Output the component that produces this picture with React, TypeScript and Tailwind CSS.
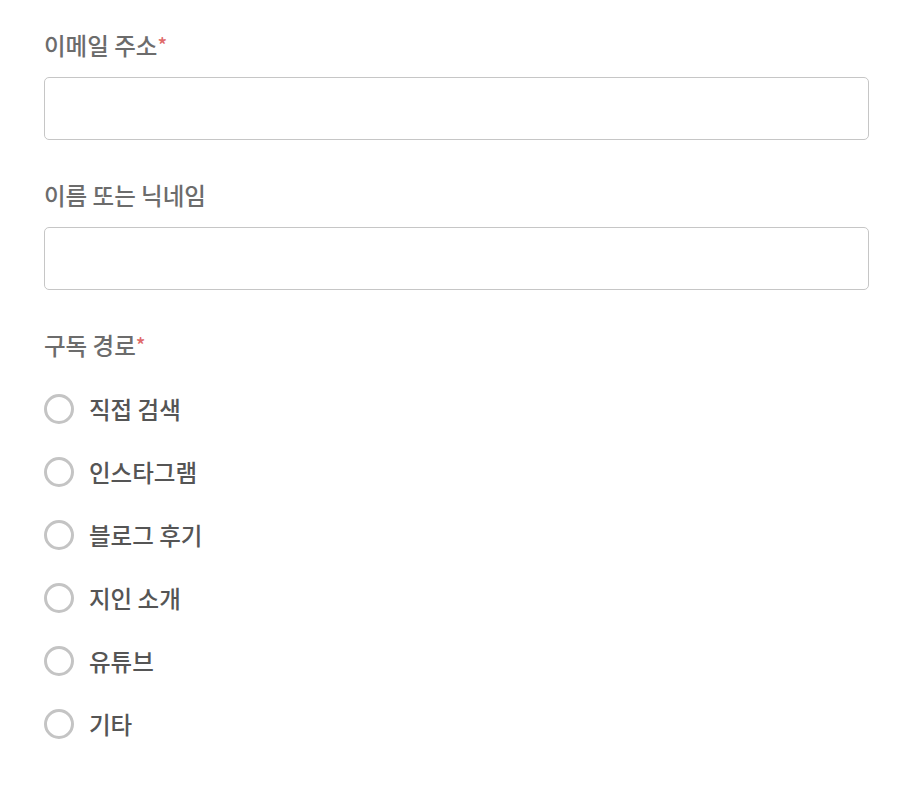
import React from "react";

const font = { fontFamily: '"Noto Sans CJK KR", "Noto Sans", sans-serif' };

function Label({ text, required }: { text: string; required?: boolean }) {
  return (
    <div className="text-[23.5px] leading-[30px] font-medium text-[#6c6c6c] mb-[17px]">
      {text}
      {required && <span className="text-[#e06a6a] text-[20px] align-top">*</span>}
    </div>
  );
}

export default function App() {
  const options = ["직접 검색", "인스타그램", "블로그 후기", "지인 소개", "유튜브", "기타"];
  return (
    <div className="bg-white w-[910px] h-[800px] px-[44px] pt-[30px]" style={font}>
      <Label text="이메일 주소" required />
      <input className="block w-[825px] h-[63px] border border-[#c6c6c6] rounded-[5px] mb-[40px] outline-none" />
      <Label text="이름 또는 닉네임" />
      <input className="block w-[825px] h-[63px] border border-[#c6c6c6] rounded-[5px] mb-[40px] outline-none" />
      <Label text="구독 경로" required />
      <div className="flex flex-col gap-[33px] pt-[17px]">
        {options.map((o) => (
          <label key={o} className="flex items-center h-[30px]">
            <span className="w-[30px] h-[30px] rounded-full border-[3px] border-[#c4c4c4] shrink-0" />
            <span className="ml-[15px] text-[23.5px] leading-[30px] font-medium text-[#555555]">{o}</span>
          </label>
        ))}
      </div>
    </div>
  );
}
